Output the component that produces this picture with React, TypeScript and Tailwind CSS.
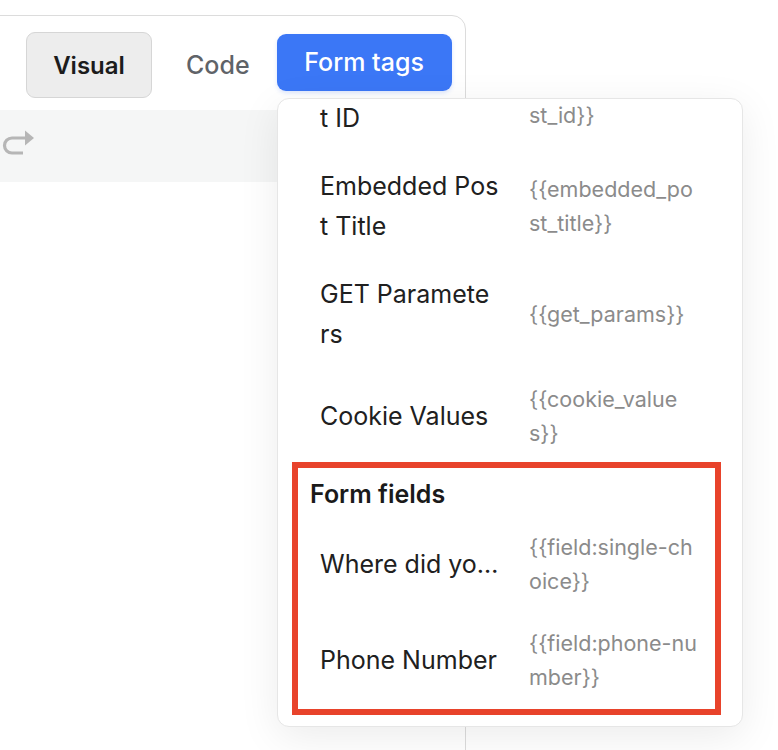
const tags = [
  { label: 'Embedded Post ID', value: '{{embedded_post_id}}' },
  { label: 'Embedded Post Title', value: '{{embedded_post_title}}' },
  { label: 'GET Parameters', value: '{{get_params}}' },
  { label: 'Cookie Values', value: '{{cookie_values}}' },
];

const fields = [
  { label: 'Where did you hear about us?', value: '{{field:single-choice}}' },
  { label: 'Phone Number', value: '{{field:phone-number}}' },
];

const TagRow = ({ label, value }: { label: string; value: string }) => (
  <div className="flex items-center py-[14px] pl-[42px]">
    <div className="w-[178.5px] shrink-0 text-[25px] leading-[40px] text-[#202020] break-all">{label}</div>
    <div className="ml-[30.5px] w-[171px] text-[21.5px] leading-[34px] text-[#8b8b8b] break-all">{value}</div>
  </div>
);

const FieldRow = ({ label, value }: { label: string; value: string }) => (
  <div className="flex items-center py-[14px] pl-[22px]">
    <div className="w-[180px] shrink-0 truncate text-[25px] leading-[40px] text-[#202020]">{label}</div>
    <div className="ml-[29px] w-[171px] text-[21.5px] leading-[34px] text-[#8b8b8b] break-all">{value}</div>
  </div>
);

export default function App() {
  return (
    <div className="relative h-[750px] overflow-hidden bg-white pt-[15px] font-['Inter',sans-serif]">
      <div className="-ml-px h-[800px] w-[467px] rounded-tr-[14px] border border-[#dcdcdc]">
        {/* Tabs */}
        <div className="flex items-center pl-[26px] pt-[16px]">
          <button className="h-[66px] w-[126px] rounded-[9px] border border-[#d6d6d6] bg-[#ededed] pt-px text-[24px] font-semibold text-[#1c1c1c]">
            Visual
          </button>
          <button className="ml-[34px] pt-px text-[25px] font-medium text-[#5f6368]">Code</button>
          <button className="-mt-[5px] ml-[27px] h-[57px] w-[175px] rounded-[9px] bg-[#3b77f6] text-[25px] font-medium text-white shadow-[0_2px_4px_rgba(59,119,246,0.18)]">
            Form tags
          </button>
        </div>

        {/* Toolbar */}
        <div className="mt-[12px] h-[72px] bg-[#f5f6f6] pt-[17px]">
          <svg width="40" height="32" viewBox="0 0 40 32" className="-ml-px">
            <path d="M24 26 H13 a7.5 7.5 0 0 1 0 -15 H27" fill="none" stroke="#b6b6b6" strokeWidth="3.2" />
            <path d="M26 3.5 L35 11 L26 18.5 Z" fill="#b6b6b6" />
          </svg>
        </div>
      </div>

      {/* Form tags dropdown */}
      <div className="absolute left-[277px] top-[98px] h-[629px] w-[466px] overflow-hidden rounded-[12px] border border-[#e6e6e6] bg-white shadow-[0_10px_40px_rgba(0,0,0,0.08)]">
        <div className="-mt-[55px]">
          {tags.map((t) => (
            <TagRow key={t.label} {...t} />
          ))}
        </div>
        <div className="ml-[14px] mr-[21px] -mt-[2px] border-[6px] border-[#e8432b] pb-px">
          <div className="pl-[12px] pt-[12px] text-[25px] font-semibold leading-[28px] text-[#1a1a1a]">Form fields</div>
          <div className="mt-[8px]">
            {fields.map((f) => (
              <FieldRow key={f.label} {...f} />
            ))}
          </div>
        </div>
      </div>
    </div>
  );
}
